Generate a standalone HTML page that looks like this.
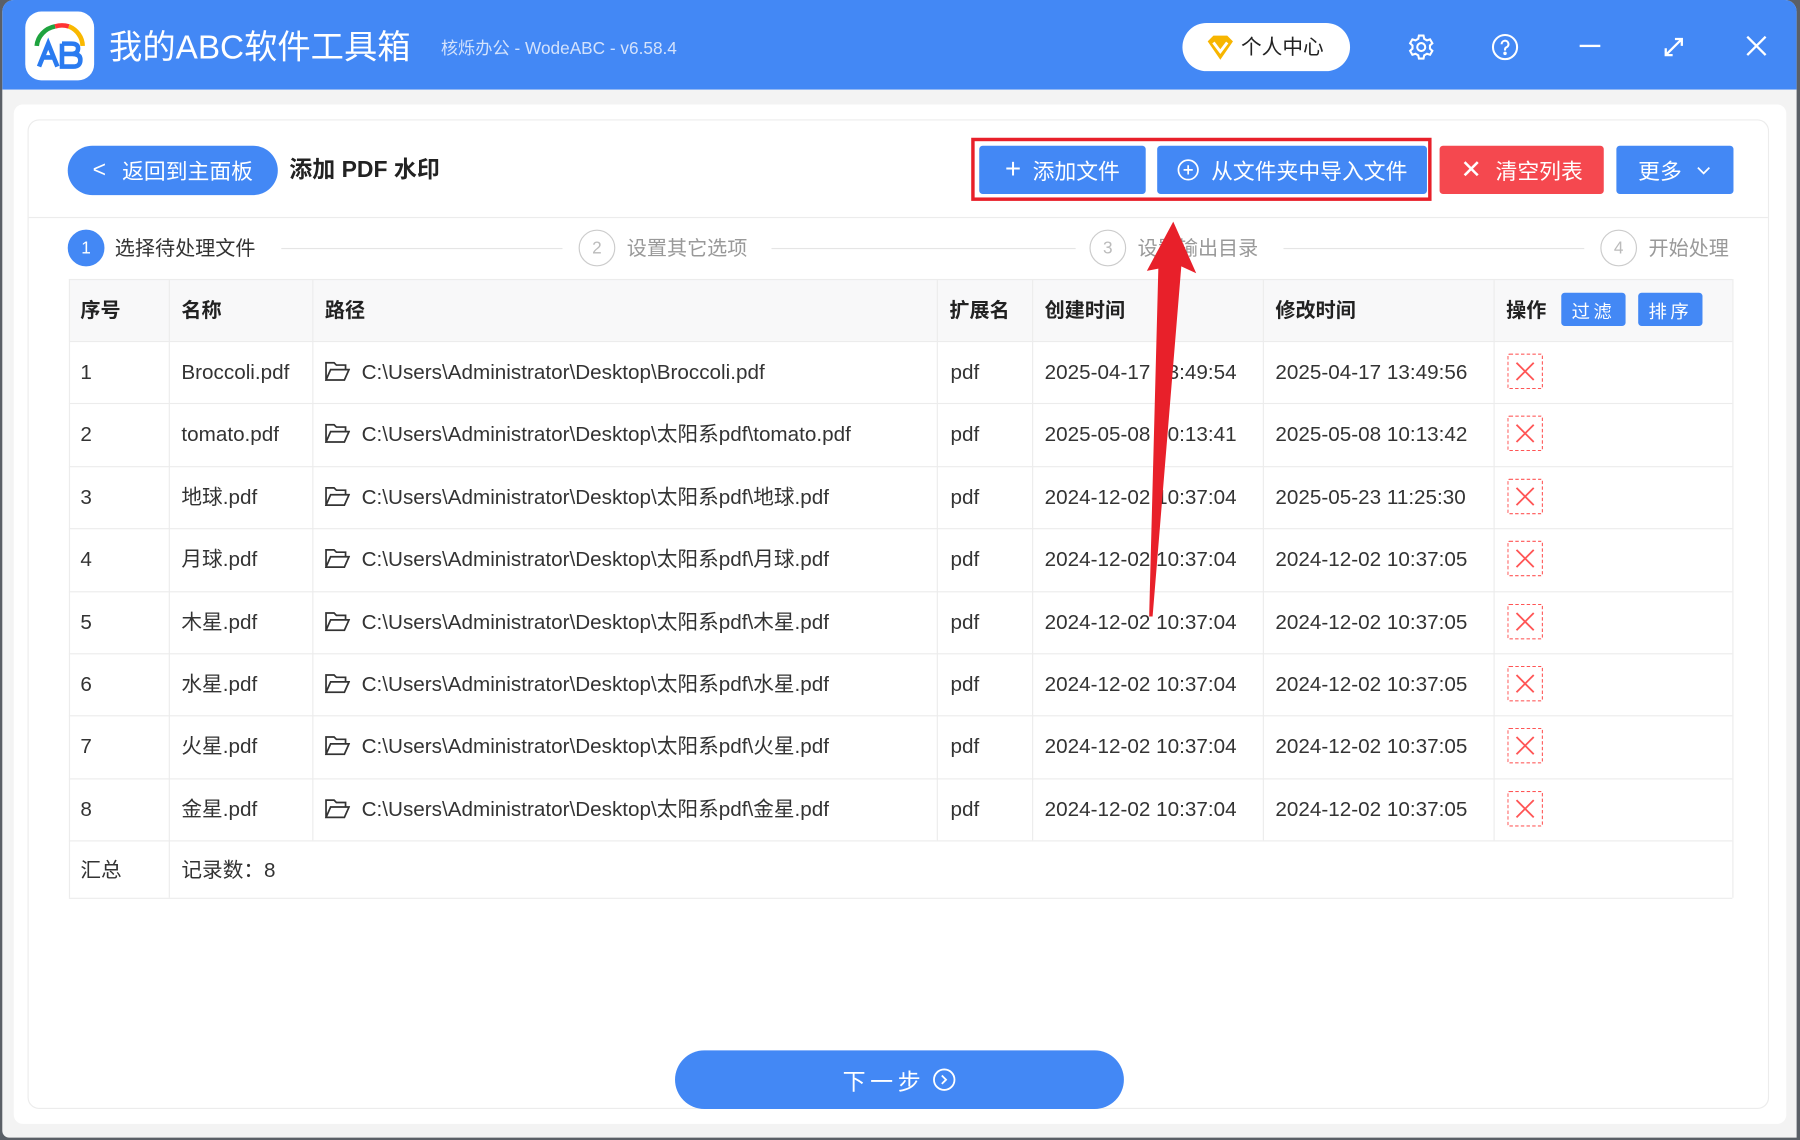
<!DOCTYPE html>
<html><head><meta charset="utf-8"><style>
*{box-sizing:border-box;margin:0;padding:0}
html,body{width:1800px;height:1140px;overflow:hidden;background:#5a5f66}
#s{position:absolute;left:0;top:0;width:1568px;height:993px;transform:scale(1.148);transform-origin:0 0;font-family:"Liberation Sans","Noto Sans CJK SC",sans-serif;}
.abs{position:absolute}
.win{left:2px;top:0;width:1563px;height:991px;background:#f3f3f3;border-radius:10px 10px 0 6px;overflow:hidden}
.bar{left:0;top:0;width:1563px;height:78px;background:#4388f5}
.panel{left:10px;top:91px;width:1544px;height:888px;background:#fff;border-radius:8px}
.card{left:24px;top:104px;width:1517px;height:862px;border:1px solid #ececec;border-radius:10px;background:#fff}
.btn{position:absolute;color:#fff;font-size:19px;display:flex;align-items:center;justify-content:center;border-radius:3px}
.t{position:absolute;font-size:17.5px;color:#333;white-space:nowrap;line-height:24px}
.b{font-size:18px}
.h{font-weight:bold;color:#222}
.row{position:absolute;left:60px;width:1449px;border-top:1px solid #ececec}
.vl{position:absolute;top:243px;height:539px;width:1px;background:#ececec}
.x{position:absolute;width:31px;height:31px;border:1px dashed #f55;border-radius:2px}
.step{position:absolute;top:200px;width:32px;height:32px;border-radius:50%;border:1.5px solid #ccc;color:#bbb;font-size:15px;display:flex;align-items:center;justify-content:center}
</style></head><body><div id="s">
<div class="abs win">
<div class="abs bar"></div>
<div class="abs panel"></div>
</div>
<div class="abs" style="left:22px;top:10px;width:60px;height:60px;background:#fff;border-radius:14px"></div>
<svg class="abs" style="left:22px;top:10px" width="60" height="60" viewBox="0 0 60 60">
<path d="M10 30 A20 19 0 0 1 26 13" stroke="#1fa33f" stroke-width="4" fill="none"/>
<path d="M26 13 A20 19 0 0 1 38 13" stroke="#f33" stroke-width="4" fill="none"/>
<path d="M38 13 A20 19 0 0 1 50 30" stroke="#f9b800" stroke-width="4" fill="none"/>
<path d="M12 48 L20 28 L28 48 M15 40 H25" stroke="#2a7bf0" stroke-width="4" fill="none"/>
<path d="M32 28 V48 H42 Q48 48 48 42 Q48 37 41 37 H32 M32 28 H40 Q46 28 46 32 Q46 37 40 37" stroke="#2a7bf0" stroke-width="4" fill="none"/>
</svg>
<div class="t" style="left:95px;top:22px;font-size:29px;line-height:40px;color:#fff">我的ABC软件工具箱</div>
<div class="t" style="left:384px;top:31px;font-size:15px;color:#d3e2fc">核烁办公 - WodeABC - v6.58.4</div>
<div class="abs" style="left:1030px;top:20px;width:146px;height:42px;background:#fff;border-radius:21px"></div>
<svg class="abs" style="left:1050px;top:30px" width="26" height="24" viewBox="0 0 26 24"><path d="M2 6 L7 1 H19 L24 6 L13 22Z" fill="#f7b500"/><path d="M7 7 L13 15 L19 7" stroke="#fff" stroke-width="2.5" fill="none"/></svg>
<div class="t" style="left:1081px;top:29px;font-size:18px;color:#222">个人中心</div>
<svg class="abs" style="left:1226px;top:29px" width="24" height="24" viewBox="0 0 24 24" fill="none" stroke="#fff" stroke-width="1.8"><circle cx="12" cy="12" r="3.5"/><path d="M10 2h4l.6 2.8 2.4 1.4 2.7-.9 2 3.4-2.1 1.9v2.8l2.1 1.9-2 3.4-2.7-.9-2.4 1.4L14 22h-4l-.6-2.8-2.4-1.4-2.7.9-2-3.4 2.1-1.9v-2.8L2.3 8.7l2-3.4 2.7.9 2.4-1.4z"/></svg>
<svg class="abs" style="left:1299px;top:29px" width="24" height="24" viewBox="0 0 24 24" fill="none" stroke="#fff" stroke-width="1.8"><circle cx="12" cy="12" r="10.5"/><path d="M9 9.5a3 3 0 1 1 4 2.8c-.8.4-1 1-1 2v.7"/><circle cx="12" cy="17.5" r=".6" fill="#fff"/></svg>
<div class="abs" style="left:1376px;top:39px;width:18px;height:2px;background:#fff"></div>
<svg class="abs" style="left:1448px;top:31px" width="20" height="20" viewBox="0 0 20 20" stroke="#fff" stroke-width="2" fill="none"><path d="M3 17 L17 3 M11 3h6v6 M3 11v6h6"/></svg>
<svg class="abs" style="left:1520px;top:30px" width="20" height="20" viewBox="0 0 20 20" stroke="#fff" stroke-width="2"><path d="M2 2 L18 18 M18 2 L2 18"/></svg>

<div class="abs card"></div>
<div class="abs" style="left:25px;top:189px;width:1515px;height:1px;background:#ececec"></div>
<div class="btn" style="left:59px;top:127px;width:183px;height:43px;border-radius:22px;background:#4388f5"><span style="margin-right:14px;font-size:20px">&lt;</span>返回到主面板</div>
<div class="t h" style="left:252px;top:136px;font-size:20px">添加 PDF 水印</div>
<div class="abs" style="left:846px;top:120px;width:401px;height:55px;border:3px solid #e8202a"></div>
<div class="btn" style="left:853px;top:127px;width:145px;height:42px;background:#4388f5"><span style="font-size:24px;margin-right:10px;font-weight:300">+</span>添加文件</div>
<div class="btn" style="left:1008px;top:127px;width:235px;height:42px;background:#4388f5"><svg width="20" height="20" viewBox="0 0 20 20" style="margin-right:10px" fill="none" stroke="#fff" stroke-width="1.5"><circle cx="10" cy="10" r="8.5"/><path d="M10 6v8M6 10h8"/></svg>从文件夹中导入文件</div>
<div class="btn" style="left:1254px;top:127px;width:143px;height:42px;background:#f5484f"><span style="font-size:22px;margin-right:12px">✕</span>清空列表</div>
<div class="btn" style="left:1408px;top:127px;width:102px;height:42px;background:#4388f5">更多<svg width="14" height="10" style="margin-left:12px" viewBox="0 0 14 10" fill="none" stroke="#fff" stroke-width="1.5"><path d="M2 3l5 5 5-5"/></svg></div>

<div class="step" style="left:59px;background:#4388f5;border-color:#4388f5;color:#fff">1</div>
<div class="t" style="left:100px;top:204px">选择待处理文件</div>
<div class="abs" style="left:245px;top:216px;width:245px;height:1px;background:#e5e5e5"></div>
<div class="step" style="left:504px">2</div>
<div class="t" style="left:546px;top:204px;color:#999">设置其它选项</div>
<div class="abs" style="left:672px;top:216px;width:265px;height:1px;background:#e5e5e5"></div>
<div class="step" style="left:949px">3</div>
<div class="t" style="left:991px;top:204px;color:#999">设置输出目录</div>
<div class="abs" style="left:1118px;top:216px;width:262px;height:1px;background:#e5e5e5"></div>
<div class="step" style="left:1394px">4</div>
<div class="t" style="left:1436px;top:204px;color:#999">开始处理</div>

<div class="abs" style="left:60px;top:243px;width:1449px;height:54px;background:#f8f8f9"></div>
<div class="row" style="top:243px"></div>
<div class="row" style="top:297px"></div><div class="row" style="top:351px"></div><div class="row" style="top:406px"></div><div class="row" style="top:460px"></div><div class="row" style="top:515px"></div><div class="row" style="top:569px"></div><div class="row" style="top:623px"></div><div class="row" style="top:678px"></div><div class="row" style="top:732px"></div><div class="row" style="top:782px"></div>
<div class="vl" style="left:60px"></div><div class="vl" style="left:147px"></div><div class="vl" style="left:272px;height:489px"></div><div class="vl" style="left:816px;height:489px"></div><div class="vl" style="left:899px;height:489px"></div><div class="vl" style="left:1100px;height:489px"></div><div class="vl" style="left:1301px;height:489px"></div><div class="vl" style="left:1509px"></div>
<div class="t h" style="left:70px;top:258px">序号</div>
<div class="t h" style="left:158px;top:258px">名称</div>
<div class="t h" style="left:283px;top:258px">路径</div>
<div class="t h" style="left:827px;top:258px">扩展名</div>
<div class="t h" style="left:910px;top:258px">创建时间</div>
<div class="t h" style="left:1111px;top:258px">修改时间</div>
<div class="t h" style="left:1312px;top:258px">操作</div>
<div class="btn" style="left:1360px;top:255px;width:56px;height:29px;font-size:16px;background:#4388f5;letter-spacing:3px">过滤</div>
<div class="btn" style="left:1427px;top:255px;width:56px;height:29px;font-size:16px;background:#4388f5;letter-spacing:3px">排序</div>

<div id="rows"></div>
<div class="t b" style="left:70px;top:746px">汇总</div>
<div class="t b" style="left:158px;top:746px">记录数：8</div>

<div class="btn" style="left:588px;top:915px;width:391px;height:51px;border-radius:26px;background:#4388f5;font-size:20px;letter-spacing:4px">下一步<svg width="21" height="21" viewBox="0 0 20 20" style="margin-left:6px" fill="none" stroke="#fff" stroke-width="1.5"><circle cx="10" cy="10" r="8.5"/><path d="M8 6.5l3.5 3.5L8 13.5"/></svg></div>

<svg class="abs" style="left:0;top:0" width="1568" height="993"><polygon points="1022,193 999,236 1009,234 1001,537 1004,537 1029,232 1042,238" fill="#e8202a"/></svg>

<script>
var d=[["Broccoli.pdf","Broccoli.pdf","2025-04-17 13:49:54","2025-04-17 13:49:56"],["tomato.pdf","太阳系pdf\\tomato.pdf","2025-05-08 10:13:41","2025-05-08 10:13:42"],["地球.pdf","太阳系pdf\\地球.pdf","2024-12-02 10:37:04","2025-05-23 11:25:30"],["月球.pdf","太阳系pdf\\月球.pdf","2024-12-02 10:37:04","2024-12-02 10:37:05"],["木星.pdf","太阳系pdf\\木星.pdf","2024-12-02 10:37:04","2024-12-02 10:37:05"],["水星.pdf","太阳系pdf\\水星.pdf","2024-12-02 10:37:04","2024-12-02 10:37:05"],["火星.pdf","太阳系pdf\\火星.pdf","2024-12-02 10:37:04","2024-12-02 10:37:05"],["金星.pdf","太阳系pdf\\金星.pdf","2024-12-02 10:37:04","2024-12-02 10:37:05"]];
var h="";for(var i=0;i<8;i++){var y=297+i*54.4;var ty=y+15;
h+='<div class="t b" style="left:70px;top:'+ty+'px">'+(i+1)+'</div><div class="t b" style="left:158px;top:'+ty+'px">'+d[i][0]+'</div>'+
'<svg class="abs" style="left:283px;top:'+(y+18)+'px" width="22" height="17" viewBox="0 0 22 17" fill="none" stroke="#333" stroke-width="1.5"><path d="M1 16V1h7l2 2h8v4M1 16l4-9h16l-4 9z"/></svg>'+
'<div class="t b" style="left:315px;top:'+ty+'px">C:\\Users\\Administrator\\Desktop\\'+d[i][1]+'</div><div class="t b" style="left:828px;top:'+ty+'px">pdf</div><div class="t b" style="left:910px;top:'+ty+'px">'+d[i][2]+'</div><div class="t b" style="left:1111px;top:'+ty+'px">'+d[i][3]+'</div>'+
'<div class="x" style="left:1313px;top:'+(y+11)+'px"><svg width="29" height="29" viewBox="0 0 29 29" stroke="#f55" stroke-width="1.6"><path d="M7 7L22 22M22 7L7 22"/></svg></div>';}
document.getElementById("rows").innerHTML=h;
</script>
</div></body></html>
